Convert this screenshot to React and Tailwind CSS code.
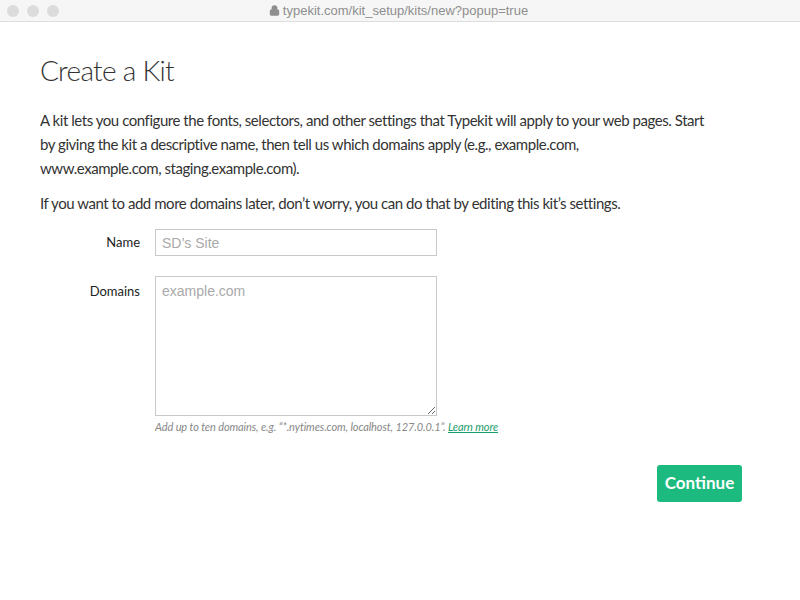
import { Lock } from "lucide-react";

const FONT = { fontFamily: '"Lato", "Open Sans", sans-serif' };

const TitleBar = () => (
  <div className="h-[22px] bg-[#f6f6f6] border-b border-[#dedede] flex items-center relative">
    <div className="flex gap-[8px] pl-[7px]">
      <span className="w-[12px] h-[12px] rounded-full bg-[#dcdcdc]" />
      <span className="w-[12px] h-[12px] rounded-full bg-[#dcdcdc]" />
      <span className="w-[12px] h-[12px] rounded-full bg-[#dcdcdc]" />
    </div>
    <div className="flex-1 flex justify-center items-center gap-[3px] pr-[62px] text-[13px] text-[#8e8e8e] font-['Liberation_Sans',sans-serif]">
      <Lock size={11} fill="#8e8e8e" strokeWidth={2.5} />
      <span>typekit.com/kit_setup/kits/new?popup=true</span>
    </div>
  </div>
);

export default function App() {
  return (
    <div className="w-[800px] h-[600px] bg-white overflow-hidden" style={FONT}>
      <TitleBar />
      <div className="px-[40px] pt-[30px] text-[#333]">
        <h1 className="text-[28px] font-light leading-[36px] tracking-[-0.7px] text-[#333]">Create a Kit</h1>
        <p className="mt-[20px] text-[15px] leading-[24px] tracking-[-0.45px] text-[#333]">
          A kit lets you configure the fonts, selectors, and other settings that Typekit will apply to your web pages. Start<br />
          by giving the kit a descriptive name, then tell us which domains apply (e.g., example.com,<br />
          www.example.com, staging.example.com).
        </p>
        <p className="mt-[11px] text-[15px] leading-[24px] tracking-[-0.45px] text-[#333]">
          If you want to add more domains later, don’t worry, you can do that by editing this kit’s settings.
        </p>

        <div className="mt-[14px] flex items-center">
          <label className="w-[115px] text-right pr-[15px] text-[13px] text-[#222]">Name</label>
          <input
            className="w-[282px] h-[27px] border border-[#c8c8c8] px-[6px] text-[14px] outline-none placeholder:text-[#a9a9a9] font-['Liberation_Sans',sans-serif]"
            placeholder="SD’s Site"
          />
        </div>

        <div className="mt-[20px] flex items-start">
          <label className="w-[115px] text-right pr-[15px] text-[13px] text-[#222] pt-[6px]">Domains</label>
          <div>
            <textarea
              className="block w-[282px] h-[140px] border border-[#c8c8c8] px-[6px] py-[4px] text-[14px] outline-none placeholder:text-[#a9a9a9] font-['Liberation_Sans',sans-serif]"
              placeholder="example.com"
            />
            <p className="mt-[3px] text-[11px] italic tracking-[-0.1px] text-[#888]">
              Add up to ten domains, e.g. “*.nytimes.com, localhost, 127.0.0.1”.{" "}
              <a href="#" className="text-[#1a9d6c] underline">Learn more</a>
            </p>
          </div>
        </div>

        <div className="flex justify-end mt-[29px] pr-[18px]">
          <button className="bg-[#1cba7e] text-white font-bold text-[17px] w-[85px] h-[37px] rounded-[3px]">
            Continue
          </button>
        </div>
      </div>
    </div>
  );
}
